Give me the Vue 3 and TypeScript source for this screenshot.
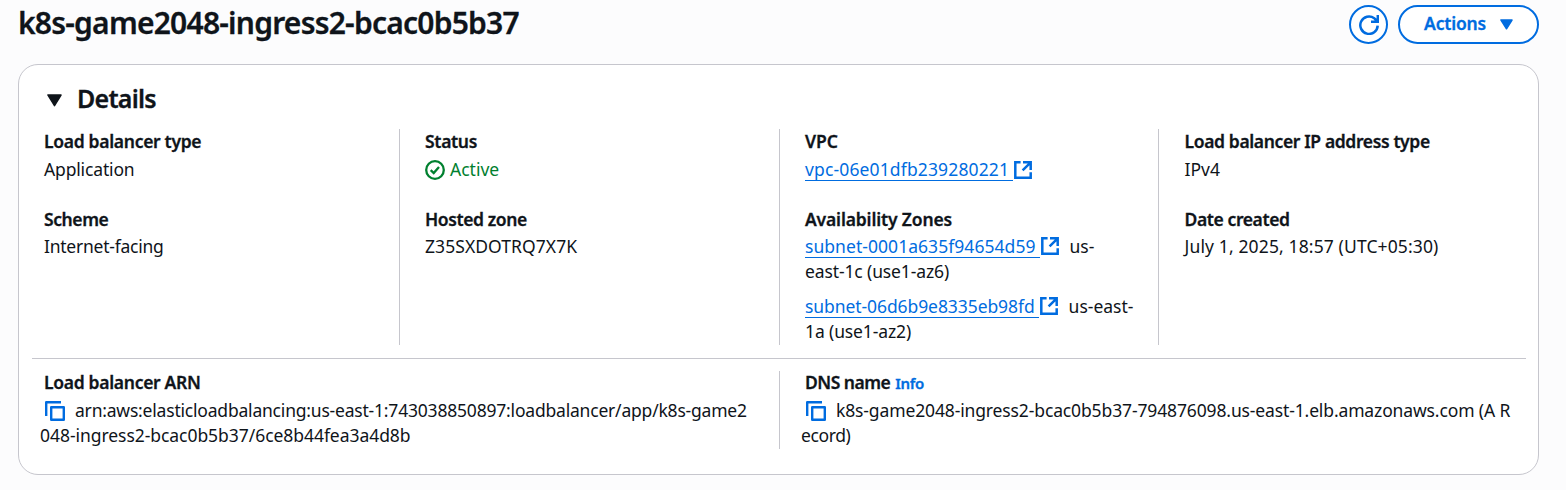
<script setup lang="ts">
interface Zone { id: string; before: string; after: string; cls: string }

const zones: Zone[] = [
  { id: 'subnet-0001a635f94654d59', before: 'us-', after: 'east-1c (use1-az6)', cls: 'z1' },
  { id: 'subnet-06d6b9e8335eb98fd', before: 'us-east-', after: '1a (use1-az2)', cls: 'z2' },
]
</script>

<template>
  <main class="page">
    <svg class="defs" aria-hidden="true">
      <symbol id="external" viewBox="0 0 20 20">
        <path d="M7.6 2.3H2.3V17.7H17.7V12.2M10 2.3H17.7V10M17.2 2.8L9.6 10.4" />
      </symbol>
      <symbol id="copy" viewBox="0 0 20 20">
        <path d="M1.2 15V1.2H16M6.2 6.2H18.8V18.8H6.2Z" stroke-linejoin="round" />
      </symbol>
    </svg>
    <header class="header">
      <h1><span class="t-title">k8s-game2048-ingress2-bcac0b5b37</span></h1>
      <div class="actions">
        <button class="btn round" aria-label="Refresh">
          <svg class="refresh" viewBox="0 0 20 20"><path d="M18.7 10.6A8.7 8.7 0 1 1 15.2 3.2L18 6M18.8 0V6.8H12" /></svg>
        </button>
        <button class="btn menu"><span class="t-actions">Actions</span>
          <svg class="caret" viewBox="0 0 13 11"><path d="M1 1H12L6.5 9.8Z" /></svg>
        </button>
      </div>
    </header>

    <section class="card">
      <h2><svg class="tri" viewBox="0 0 15 13"><path d="M1 1H14L7.5 11.6Z" /></svg><span class="t-details">Details</span></h2>
      <div class="grid four">
        <div class="col">
          <div class="pair"><b class="t-lbt">Load balancer type</b><p><span class="t-app">Application</span></p></div>
          <div class="pair"><b class="t-scheme">Scheme</b><p><span class="t-int">Internet-facing</span></p></div>
        </div>
        <div class="col">
          <div class="pair"><b class="t-status">Status</b>
            <p class="ok"><svg class="check" viewBox="0 0 20 20"><circle cx="10" cy="10" r="8.8" /><path d="M5.7 10.2L8.7 13L14 7" /></svg><span>Active</span></p></div>
          <div class="pair"><b class="t-hosted">Hosted zone</b><p><span class="t-z">Z35SXDOTRQ7X7K</span></p></div>
        </div>
        <div class="col">
          <div class="pair"><b>VPC</b>
            <p><a class="link"><span class="t-vpcid">vpc-06e01dfb239280221</span></a><svg class="ext"><use href="#external" /></svg></p></div>
          <div class="pair"><b class="t-az">Availability Zones</b>
            <div v-for="z in zones" :key="z.id" class="zone" :class="z.cls">
              <p><a class="link"><span class="t-id">{{ z.id }}</span></a><svg class="ext"><use href="#external" /></svg><span class="t-before">{{ z.before }}</span></p>
              <p><span class="t-after">{{ z.after }}</span></p>
            </div>
          </div>
        </div>
        <div class="col last">
          <div class="pair"><b class="t-ip">Load balancer IP address type</b><p><span>IPv4</span></p></div>
          <div class="pair"><b class="t-date">Date created</b><p><span class="t-dateval">July 1, 2025, 18:57 (UTC+05:30)</span></p></div>
        </div>
      </div>
      <div class="grid two">
        <div class="col">
          <div class="pair"><b class="t-arn">Load balancer ARN</b>
            <p><svg class="copy"><use href="#copy" /></svg><span class="t-arn1">arn:aws:elasticloadbalancing:us-east-1:743038850897:loadbalancer/app/k8s-game2</span></p>
            <p class="wrap"><span class="t-arn2">048-ingress2-bcac0b5b37/6ce8b44fea3a4d8b</span></p></div>
        </div>
        <div class="col">
          <div class="pair"><b class="t-dns">DNS name</b><a class="info">Info</a>
            <p><svg class="copy"><use href="#copy" /></svg><span class="t-dns1">k8s-game2048-ingress2-bcac0b5b37-794876098.us-east-1.elb.amazonaws.com (A R</span></p>
            <p class="wrap"><span class="t-dns2">ecord)</span></p></div>
        </div>
      </div>
    </section>
  </main>
</template>

<style>
body { margin: 0; background: #fcfcfd; }
</style>

<style scoped>
.page { box-sizing: border-box; width: 1566px; height: 490px; padding: 5px 27px 0 18px; overflow: hidden; background: #fcfcfd; color: #0f141a; font: 17.5px/25px "Noto Sans", "Open Sans", sans-serif; white-space: nowrap; }
.defs { position: absolute; width: 0; height: 0; }
svg { flex: none; fill: none; stroke: #006ce0; stroke-width: 2.5; }
b, h1, h2, .info { font-weight: 600; -webkit-text-stroke: 0.3px currentColor; }
.header { display: flex; justify-content: space-between; height: 59px; }
h1 { margin: 0; font-size: 30px; line-height: 35px; }
.actions { display: flex; gap: 10px; }
.btn { box-sizing: border-box; height: 39px; margin: 0; padding: 0; display: flex; align-items: center; justify-content: center; border: 2px solid #006ce0; border-radius: 20px; background: #fff; color: #006ce0; font: 600 17.5px/25px "Noto Sans", sans-serif; }
.round { width: 39px; }
.menu { width: 141px; gap: 14px; }
.refresh { width: 20px; height: 20px; }
.caret { width: 13px; height: 11px; }
.caret path { fill: #006ce0; stroke-width: 1.5; stroke-linejoin: round; }
.card { box-sizing: border-box; width: 1521px; height: 411px; padding: 18px 12px 0 13px; border: 1px solid #c6c6cd; border-radius: 20px; background: #fff; }
h2 { display: flex; align-items: center; height: 30px; margin: 0 0 16px 15px; font-size: 25px; line-height: 30px; }
.tri { width: 15px; height: 13px; margin-right: 15px; margin-top: 5px; }
.tri path { fill: #0f141a; stroke: #0f141a; stroke-width: 1.5; stroke-linejoin: round; }
.grid { display: grid; }
.four { grid-template-columns: 368px 380px 379px 1fr; height: 216px; padding-bottom: 13px; border-bottom: 1px solid #c6c6cd; }
.two { grid-template-columns: 748px 1fr; height: 78px; margin-top: 12px; }
.col { box-sizing: border-box; padding-left: 25px; border-right: 1px solid #c6c6cd; }
.col:first-child { padding-left: 12px; }
.col:last-child { border-right: 0; }
.col.last { padding-left: 25.6px; }
.pair { height: 77.5px; }
.pair > b { display: inline-block; height: 28px; line-height: 25px; vertical-align: top; }
.pair + .pair > b { height: 27px; }
.two .pair { margin-top: -1px; }
p { display: flex; align-items: center; height: 25px; margin: 0; }
.ok { color: #00802f; }
.check { width: 20px; height: 20px; margin-right: 5px; stroke: #00802f; stroke-width: 2.3; }
.link { box-sizing: border-box; height: 23px; padding-right: 4px; border-bottom: 1px solid #006ce0; color: #006ce0; line-height: 23px; }
.ext { width: 20px; height: 20px; }
.t-before { margin-left: 10px; }
.zone { height: 60px; }
.copy { width: 20px; height: 20px; margin: 0 10px 0 1px; stroke-width: 2.4; }
.wrap { margin-left: -4px; }
.info { margin-left: 5px; color: #006ce0; font-size: 15px; letter-spacing: -0.35px; }
.t-title { letter-spacing: -0.77px; }
.t-actions { margin-top: -2px; letter-spacing: -0.2px; -webkit-text-stroke: 0.3px currentColor; }
.t-details { letter-spacing: -0.75px; }
.t-lbt { letter-spacing: -0.3px; }
.t-scheme, .t-hosted, .t-date { letter-spacing: -0.4px; }
.t-status, .t-arn { letter-spacing: -0.3px; }
.t-az { letter-spacing: -0.15px; }
.t-ip { letter-spacing: -0.37px; }
.t-dns { letter-spacing: -0.5px; }
.t-app { letter-spacing: -0.15px; }
.t-int { letter-spacing: -0.24px; }
.t-z { letter-spacing: 0.07px; }
.t-vpcid { letter-spacing: 0.14px; }
.z1 .t-id { letter-spacing: 0.05px; }
.z2 .t-id { letter-spacing: -0.08px; }
.t-after { letter-spacing: -0.12px; }
.t-dateval { letter-spacing: 0.13px; }
.t-arn1 { letter-spacing: -0.2px; }
.t-arn2 { letter-spacing: -0.05px; }
.t-dns1 { letter-spacing: -0.13px; }
.t-dns2 { letter-spacing: -0.4px; }
</style>
